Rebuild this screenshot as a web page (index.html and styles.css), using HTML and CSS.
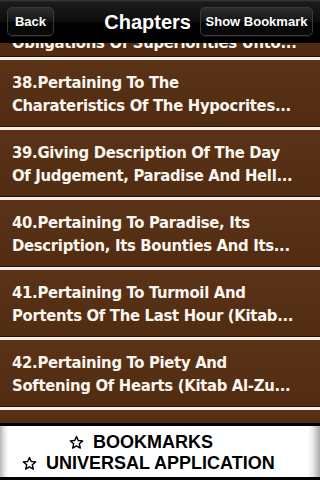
FILE: index.html
```html
<!DOCTYPE html>
<html>
<head>
<meta charset="utf-8">
<link rel="stylesheet" href="styles.css">
</head>
<body>
<div class="screen">
  <header class="nav">
    <div class="btn btn-back">Back</div>
    <div class="title">Chapters</div>
    <div class="btn btn-show">Show Bookmark</div>
  </header>
  <div class="list">
    <div class="row row-partial"><span>Obligations Of Superiorities Unto...</span></div>
    <div class="row"><span>38.Pertaining To The</span><span>Charateristics Of The Hypocrites...</span></div>
    <div class="row"><span>39.Giving Description Of The Day</span><span>Of Judgement, Paradise And Hell...</span></div>
    <div class="row"><span>40.Pertaining To Paradise, Its</span><span>Description, Its Bounties And Its...</span></div>
    <div class="row"><span>41.Pertaining To Turmoil And</span><span>Portents Of The Last Hour (Kitab...</span></div>
    <div class="row"><span>42.Pertaining To Piety And</span><span>Softening Of Hearts (Kitab Al-Zu...</span></div>
    <div class="row-tail"></div>
  </div>
  <footer class="banner">
    <div class="line line-1"><svg class="star" viewBox="0 0 16 16"><path d="M8 1.5 L9.9 5.9 L14.6 6.3 L11 9.4 L12.1 14 L8 11.6 L3.9 14 L5 9.4 L1.4 6.3 L6.1 5.9 Z" fill="none" stroke="#000" stroke-width="1.5" stroke-linejoin="round"/></svg>BOOKMARKS</div>
    <div class="line line-2"><svg class="star" viewBox="0 0 16 16"><path d="M8 1.5 L9.9 5.9 L14.6 6.3 L11 9.4 L12.1 14 L8 11.6 L3.9 14 L5 9.4 L1.4 6.3 L6.1 5.9 Z" fill="none" stroke="#000" stroke-width="1.5" stroke-linejoin="round"/></svg>UNIVERSAL APPLICATION</div>
  </footer>
</div>
</body>
</html>
```
FILE: styles.css
```css
* { box-sizing: border-box; }
html, body { margin: 0; padding: 0; background: #000; }
.screen {
  width: 320px;
  height: 480px;
  overflow: hidden;
  display: flex;
  flex-direction: column;
  font-family: "Liberation Sans", Arial, sans-serif;
}
.nav {
  height: 43px;
  flex: none;
  display: flex;
  align-items: center;
  padding: 0 7px;
  background: linear-gradient(#3c3c3c 0px, #1c1c1c 2px, #0c0c0c 22px, #000 23px, #000 43px);
}
.btn {
  height: 29px;
  border-radius: 5px;
  display: flex;
  align-items: center;
  justify-content: center;
  color: #fff;
  font-weight: bold;
  font-size: 13px;
  line-height: 15px;
  background: linear-gradient(#2e2e2e, #151515 50%, #050505 51%, #0a0a0a);
  border: 1px solid #3a3a3a;
  box-shadow: 0 1px 0 rgba(255,255,255,0.08);
}
.btn-back { width: 47px; }
.btn-show { width: 113px; }
.title {
  flex: 1;
  text-align: right;
  padding-right: 9px;
  color: #fff;
  font-weight: bold;
  font-size: 20px;
  line-height: 24px;
}
.list {
  height: 380px;
  flex: none;
  overflow: hidden;
  display: flex;
  flex-direction: column;
  background: #522d12;
}
.row {
  height: 70px;
  flex: none;
  display: flex;
  flex-direction: column;
  justify-content: center;
  padding: 0 0 0 12px;
  border-bottom: 3px solid #f4eee8;
  box-shadow: inset 0 -1px 0 #2a1406;
  background: linear-gradient(#5a3317, #512c11);
  color: #fbf7f0;
  font-family: "DejaVu Sans Condensed", "DejaVu Sans", sans-serif;
  font-weight: bold;
  font-size: 16.5px;
  letter-spacing: -0.3px;
  line-height: 23px;
  white-space: nowrap;
}
.row-partial {
  height: 17px;
  overflow: hidden;
  justify-content: flex-start;
  background: #512c11;
}
.row-partial span {
  display: block;
  height: 14px;
  line-height: 0px;
}
.row-tail {
  flex: 1;
  background: linear-gradient(#5a3317, #512c11);
}
.banner {
  height: 57px;
  flex: none;
  border-top: 3px solid #000;
  border-bottom: 3px solid #000;
  background: linear-gradient(90deg, #b8b8b8 0px, #ececec 5px, #fff 9px, #fff 308px, #e8e8e8 313px, #a8a8a8 320px);
  display: flex;
  flex-direction: column;
  justify-content: center;
  padding-top: 3px;
  font-weight: bold;
  font-size: 18px;
  line-height: 21px;
  color: #000;
}
.line {
  display: flex;
  align-items: center;
}
.line-1 { padding-left: 69px; }
.line-2 { padding-left: 22px; }
.star {
  width: 15px;
  height: 15px;
  margin-right: 9px;
}
```
